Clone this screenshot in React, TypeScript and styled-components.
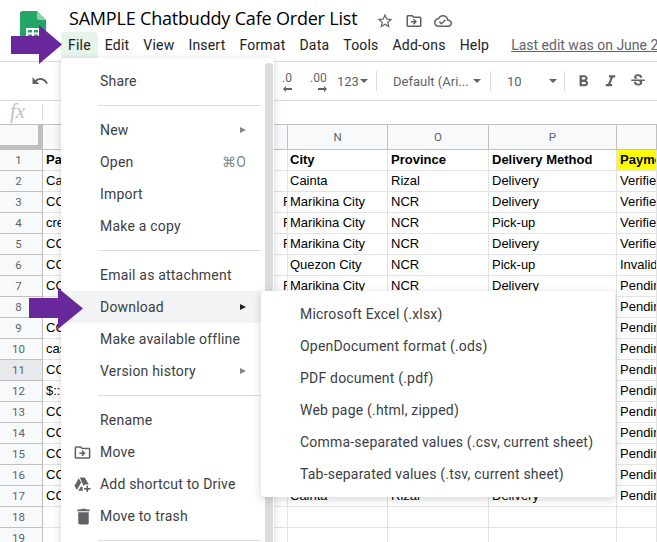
import React from "react";
import styled, { createGlobalStyle } from "styled-components";

const Global = createGlobalStyle`
  html, body { margin: 0; padding: 0; background: #fff; }
  * { box-sizing: border-box; }
`;

const P = {
  star: "M22 9.24l-7.19-.62L12 2 9.19 8.63 2 9.24l5.46 4.73L5.82 21 12 17.27 18.18 21l-1.63-7.03L22 9.24zM12 15.4l-3.76 2.27 1-4.28-3.32-2.88 4.38-.38L12 6.1l1.71 4.04 4.38.38-3.32 2.88 1 4.28L12 15.4z",
  move: "M20 6h-8l-2-2H4c-1.1 0-1.99.9-1.99 2L2 18c0 1.1.9 2 2 2h16c1.1 0 2-.9 2-2V8c0-1.1-.9-2-2-2zm0 12H4V6h5.17l2 2H20v10zm-8.01-9l-1.41 1.41L12.16 12H8v2h4.16l-1.59 1.59L11.99 17 16 13.01 11.99 9z",
  cloud: "M19.35 10.04C18.67 6.59 15.64 4 12 4 9.11 4 6.6 5.64 5.35 8.04 2.34 8.36 0 10.91 0 14c0 3.31 2.69 6 6 6h13c2.76 0 5-2.24 5-5 0-2.64-2.05-4.78-4.65-4.96zM19 18H6c-2.21 0-4-1.79-4-4 0-2.05 1.53-3.76 3.56-3.97l1.07-.11.5-.95C8.08 7.14 9.94 6 12 6c2.62 0 4.88 1.86 5.39 4.43l.3 1.5 1.53.11c1.56.1 2.78 1.41 2.78 2.96 0 1.65-1.35 3-3 3zm-9-3.82l-2.09-2.09L6.5 13.5 10 17l6.01-6.01-1.41-1.41z",
  undo: "M12.5 8c-2.65 0-5.05.99-6.9 2.6L2 7v9h9l-3.62-3.62c1.39-1.16 3.16-1.88 5.12-1.88 3.54 0 6.55 2.31 7.6 5.5l2.37-.78C21.08 11.03 17.15 8 12.5 8z",
  trash: "M6 19c0 1.1.9 2 2 2h8c1.1 0 2-.9 2-2V7H6v12zM19 4h-3.5l-1-1h-5l-1 1H5v2h14V4z",
  drive: "M8.6 3h6.2l5.2 9h-3.2c-1.5 0-2.8.5-3.6 1.5zM7.3 4.2l3.1 5.4L5 19l-3.1-5.3zM6.6 20l3.1-5.3h2.6c-.2.7-.3 1.4-.3 2 0 1.2.3 2.3.9 3.3zM17 13.5h2v3h3v2h-3v3h-2v-3h-3v-2h3z",
  bold: "M15.6 10.79c.97-.67 1.65-1.77 1.65-2.79 0-2.26-1.75-4-4-4H7v14h7.04c2.09 0 3.71-1.7 3.71-3.79 0-1.52-.86-2.82-2.15-3.42zM10 6.5h3c.83 0 1.5.67 1.5 1.5s-.67 1.5-1.5 1.5h-3v-3zm3.5 9H10v-3h3.5c.83 0 1.5.67 1.5 1.5s-.67 1.5-1.5 1.5z",
  italic: "M10 4v3h2.21l-3.42 8H6v3h8v-3h-2.21l3.42-8H18V4z",
  strike: "M7.24 8.75c-.26-.48-.39-1.03-.39-1.67 0-.61.13-1.16.4-1.67.26-.5.63-.93 1.11-1.29.48-.35 1.05-.63 1.7-.83.66-.19 1.39-.29 2.17-.29.81 0 1.54.11 2.21.34.66.22 1.23.54 1.69.94.47.4.83.88 1.08 1.43.25.55.38 1.15.38 1.81h-3.01c0-.31-.05-.59-.15-.85-.09-.27-.24-.49-.44-.68-.2-.19-.45-.33-.75-.44-.3-.1-.66-.16-1.06-.16-.39 0-.74.04-1.03.13-.29.09-.53.21-.72.36-.19.16-.34.34-.44.55-.1.21-.15.43-.15.66 0 .48.25.88.74 1.21.38.25.77.48 1.41.7H7.39c-.05-.08-.11-.17-.15-.25zM21 12v-2H3v2h9.62c.18.07.4.14.55.2.37.17.66.34.87.51.21.17.35.36.43.57.07.2.11.43.11.69 0 .23-.05.45-.14.66-.09.2-.23.38-.42.53-.19.15-.42.26-.71.35-.29.08-.63.13-1.01.13-.43 0-.83-.04-1.18-.13s-.66-.23-.91-.42c-.25-.19-.45-.44-.59-.75-.14-.31-.25-.76-.25-1.21H6.4c0 .55.08 1.13.24 1.58.16.45.37.85.65 1.21.28.35.6.66.98.92.37.26.78.48 1.22.65.44.17.9.3 1.38.39.48.08.96.13 1.44.13.8 0 1.53-.09 2.18-.28s1.21-.45 1.67-.79c.46-.34.82-.77 1.07-1.27s.38-1.07.38-1.71c0-.6-.1-1.14-.31-1.61-.05-.11-.11-.23-.17-.33H21z",
};

const Icon = ({ d, size = 20, color = "#5f6368" }: { d: string; size?: number; color?: string }) => (
  <svg width={size} height={size} viewBox="0 0 24 24" fill={color}>
    <path d={d} />
  </svg>
);

const Page = styled.div`
  position: relative;
  width: 657px;
  height: 542px;
  overflow: hidden;
  display: flex;
  flex-direction: column;
  background: #fff;
  font-family: Roboto, "Liberation Sans", sans-serif;
`;

/* header */
const Header = styled.header`
  height: 61px;
  flex: none;
  display: flex;
  background: #fff;
`;
const LogoSlot = styled.div`
  width: 61px;
  flex: none;
  padding: 11px 0 0 20px;
`;
const TitleBlock = styled.div`
  display: flex;
  flex-direction: column;
  white-space: nowrap;
`;
const TitleRow = styled.div`
  height: 32px;
  padding: 4px 0 0 8px;
  display: flex;
  align-items: center;
`;
const Title = styled.h1`
  margin: 0;
  font: 400 18px/24px "Open Sans", Roboto, sans-serif;
  color: #000;
  letter-spacing: -0.19px;
`;
const TitleIcons = styled.div`
  display: flex;
  align-items: center;
  gap: 11px;
  margin-left: 19px;
  padding-top: 5px;
`;
const MenuBar = styled.nav`
  display: flex;
  align-items: center;
  height: 26px;
`;
const MenuTab = styled.div<{ $active?: boolean }>`
  height: 26px;
  padding: 0 7px;
  display: flex;
  align-items: center;
  font-size: 14px;
  letter-spacing: 0.2px;
  color: #202124;
  background: ${(p) => (p.$active ? "#e6f4ea" : "transparent")};
  border-radius: 4px 4px 0 0;
`;
const LastEdit = styled.a`
  margin-left: 15px;
  font-size: 14px;
  color: #5f6368;
  text-decoration: underline;
`;

/* toolbar */
const Toolbar = styled.div`
  height: 40px;
  flex: none;
  display: flex;
  align-items: center;
  border-top: 1px solid #dadce0;
  border-bottom: 1px solid #dadce0;
  padding-left: 31px;
  color: #5f6368;
  font-size: 13px;
`;
const ToolSlot = styled.div<{ $w: number; $inset?: number }>`
  width: ${(p) => p.$w}px;
  flex: none;
  padding-left: ${(p) => p.$inset ?? 0}px;
  display: flex;
  align-items: center;
  white-space: nowrap;
`;
const ToolText = styled.span<{ $w: number }>`
  width: ${(p) => p.$w}px;
  flex: none;
`;
const ToolSep = styled.div`
  width: 1px;
  height: 20px;
  flex: none;
  background: #dadce0;
`;
const Caret = styled.span<{ $gap?: number }>`
  display: inline-block;
  margin-left: ${(p) => p.$gap ?? 1}px;
  border-left: 4px solid transparent;
  border-right: 4px solid transparent;
  border-top: 4px solid #5f6368;
`;
const DecimalWrap = styled.span`
  position: relative;
  display: inline-block;
  font-size: 12px;
  font-weight: 400;
  padding-bottom: 6px;
`;
const DecimalArrow = styled.svg<{ $flip?: boolean }>`
  position: absolute;
  right: 0;
  bottom: -1px;
  transform: ${(p) => (p.$flip ? "scaleX(-1)" : "none")};
`;

/* formula bar */
const FormulaBar = styled.div`
  height: 23px;
  flex: none;
  display: flex;
  align-items: center;
  padding-left: 10px;
`;
const Fx = styled.span`
  font: italic 21px "Liberation Serif", serif;
  color: #bdc1c6;
  width: 33px;
  border-right: 1px solid #dadce0;
  height: 17px;
  line-height: 15px;
`;

/* sheet */
const Sheet = styled.div`
  flex: 1;
  min-height: 0;
  overflow: hidden;
  display: grid;
  grid-template-columns: 43px 238px 7px 100px 101px 128px 40px;
  grid-template-rows: 25px;
  grid-auto-rows: 21px;
  border-top: 1px solid #c0c0c0;
  font: 13px "Liberation Sans", Arial, sans-serif;
  color: #000;
`;
const Corner = styled.div`
  background: #f8f9fa;
  border-right: 5px solid #c0c0c0;
  border-bottom: 5px solid #c0c0c0;
`;
const ColHead = styled.div<{ $open?: boolean }>`
  background: #f8f9fa;
  border-right: ${(p) => (p.$open ? "0" : "1px solid #c0c0c0")};
  border-bottom: 1px solid #c0c0c0;
  display: flex;
  align-items: center;
  justify-content: center;
  font: 11.5px Roboto, sans-serif;
  color: #5f6368;
`;
const RowHead = styled.div<{ $selected?: boolean }>`
  background: ${(p) => (p.$selected ? "#e8eaed" : "#f8f9fa")};
  border-right: 1px solid #c0c0c0;
  border-bottom: 1px solid #c0c0c0;
  padding-right: 5px;
  display: flex;
  align-items: center;
  justify-content: center;
  font: 11.5px Roboto, sans-serif;
  color: #5f6368;
`;
const Cell = styled.div<{ $bold?: boolean; $fill?: string; $open?: boolean; $pad?: number }>`
  background: ${(p) => p.$fill ?? "#fff"};
  border-right: ${(p) => (p.$open ? "0" : "1px solid #e2e3e3")};
  border-bottom: 1px solid #e2e3e3;
  padding: 0 0 0 ${(p) => p.$pad ?? 3}px;
  font-weight: ${(p) => (p.$bold ? 700 : 400)};
  line-height: 20px;
  white-space: nowrap;
  overflow: hidden;
`;

/* menus */
const FileMenu = styled.div`
  position: absolute;
  left: 61px;
  top: 58px;
  width: 213px;
  height: 500px;
  padding-top: 7px;
  background: #fff;
  border-radius: 4px;
  box-shadow: 0 2px 6px 2px rgba(60, 64, 67, 0.15);
`;
const ScrollThumb = styled.div`
  position: absolute;
  left: 204px;
  top: 5px;
  width: 8px;
  bottom: 0;
  border-radius: 4px 4px 0 0;
  background: #dadce0;
`;
const MenuList = styled.div`
  width: 200px;
`;
const Item = styled.div<{ $hover?: boolean }>`
  height: 32px;
  display: flex;
  align-items: center;
  padding: 0 15px 0 12px;
  font-size: 14px;
  letter-spacing: 0.2px;
  color: #3c4043;
  white-space: nowrap;
  background: ${(p) => (p.$hover ? "#f1f3f4" : "transparent")};
`;
const ItemIcon = styled.span`
  width: 27px;
  flex: none;
  display: flex;
  align-items: center;
`;
const ItemLabel = styled.span`
  flex: 1;
`;
const Shortcut = styled.span`
  color: #80868b;
`;
const SubArrow = styled.span<{ $dark?: boolean }>`
  width: 0;
  height: 0;
  border-top: 3.5px solid transparent;
  border-bottom: 3.5px solid transparent;
  border-left: 6px solid ${(p) => (p.$dark ? "#202124" : "#80868b")};
`;
const Sep = styled.div`
  height: 1px;
  margin: 8px 0 8px 37px;
  background: #dadce0;
`;
const SubMenu = styled.div`
  position: absolute;
  left: 261px;
  top: 291px;
  width: 354px;
  height: 206px;
  padding: 7px 0;
  background: #fff;
  border-radius: 4px;
  box-shadow: 0 2px 6px 2px rgba(60, 64, 67, 0.15);
`;
const SubItem = styled.div`
  height: 32px;
  display: flex;
  align-items: center;
  padding-left: 39px;
  font-size: 14px;
  letter-spacing: 0.2px;
  color: #3c4043;
  white-space: nowrap;
`;
const PurpleArrow = styled.svg<{ $x: number; $y: number }>`
  position: absolute;
  left: ${(p) => p.$x}px;
  top: ${(p) => p.$y}px;
`;

const Logo = () => (
  <svg width="26" height="36" viewBox="0 0 26 36">
    <path d="M2.5 0H17l9 9v24.5a2.5 2.5 0 0 1-2.5 2.5h-21A2.5 2.5 0 0 1 0 33.500v-31A2.500 2.500 0 0 1 2.500 0z" fill="#23a566" />
    <path d="M17 0l9 9h-6.500A2.500 2.500 0 0 1 17 6.500z" fill="#8ed1b1" />
    <path d="M6 17h14v11H6z" fill="#fff" />
    <path d="M8 19h4v2.500H8zM14 19h4v2.500h-4zM8 23.500h4V26H8zM14 23.500h4V26h-4z" fill="#23a566" />
  </svg>
);

const tabs = ["Edit", "View", "Insert", "Format", "Data", "Tools", "Add-ons", "Help"];

const left = ["Ca", "CC", "cre", "CC", "CC", "CC", "", "CC", "cas", "CC", "$::", "CC", "CC", "CC", "CC", "CC"];
const stub = [3, 4, 5, 7, 8];
const body: [string, string, string][] = [
  ["Cainta", "Rizal", "Delivery"],
  ["Marikina City", "NCR", "Delivery"],
  ["Marikina City", "NCR", "Pick-up"],
  ["Marikina City", "NCR", "Delivery"],
  ["Quezon City", "NCR", "Pick-up"],
  ["Marikina City", "NCR", "Delivery"],
];
const status = (row: number) => (row <= 5 ? "Verified" : row === 6 ? "Invalid" : row <= 17 ? "Pending" : "");

const rowCells = (row: number) => {
  const data = row === 17 ? body[0] : body[row - 2] ?? ["", "", ""];
  return (
    <React.Fragment key={row}>
      <RowHead $selected={row === 11}>{row}</RowHead>
      <Cell $open>{row <= 17 ? left[row - 2] : ""}</Cell>
      <Cell $pad={2}>{stub.includes(row) ? "F" : ""}</Cell>
      <Cell $pad={2}>{data[0]}</Cell>
      <Cell>{data[1]}</Cell>
      <Cell>{data[2]}</Cell>
      <Cell>{status(row)}</Cell>
    </React.Fragment>
  );
};

const DecimalMark = ({ flip }: { flip?: boolean }) => (
  <DecimalArrow $flip={flip} width="9" height="6" viewBox="0 0 9 6">
    <path d="M0 3l3-3v2h6v2H3v2z" fill="#5f6368" />
  </DecimalArrow>
);

export default function App() {
  return (
    <Page>
      <Global />
      <Header>
        <LogoSlot>
          <Logo />
        </LogoSlot>
        <TitleBlock>
          <TitleRow>
            <Title>SAMPLE Chatbuddy Cafe Order List</Title>
            <TitleIcons>
              <Icon d={P.star} size={18} />
              <Icon d={P.move} size={18} />
              <Icon d={P.cloud} size={18} />
            </TitleIcons>
          </TitleRow>
          <MenuBar>
            <MenuTab $active>File</MenuTab>
            {tabs.map((t) => (
              <MenuTab key={t}>{t}</MenuTab>
            ))}
            <LastEdit>Last edit was on June 2</LastEdit>
          </MenuBar>
        </TitleBlock>
      </Header>

      <Toolbar>
        <ToolSlot $w={251}>
          <Icon d={P.undo} size={18} />
        </ToolSlot>
        <ToolSlot $w={28}>
          <DecimalWrap>
            .0
            <DecimalMark />
          </DecimalWrap>
        </ToolSlot>
        <ToolSlot $w={27}>
          <DecimalWrap>
            .00
            <DecimalMark flip />
          </DecimalWrap>
        </ToolSlot>
        <ToolSlot $w={39}>
          123
          <Caret />
        </ToolSlot>
        <ToolSep />
        <ToolSlot $w={113} $inset={16}>
          <ToolText $w={79}>Default (Ari...</ToolText>
          <Caret />
        </ToolSlot>
        <ToolSep />
        <ToolSlot $w={73} $inset={16}>
          <ToolText $w={41}>10</ToolText>
          <Caret />
        </ToolSlot>
        <ToolSep />
        <ToolSlot $w={28} $inset={9}>
          <Icon d={P.bold} size={21} />
        </ToolSlot>
        <ToolSlot $w={28} $inset={8}>
          <Icon d={P.italic} size={19} />
        </ToolSlot>
        <ToolSlot $w={28} $inset={8}>
          <Icon d={P.strike} size={18} />
        </ToolSlot>
      </Toolbar>

      <FormulaBar>
        <Fx>fx</Fx>
      </FormulaBar>

      <Sheet>
        <Corner />
        <ColHead $open />
        <ColHead />
        <ColHead>N</ColHead>
        <ColHead>O</ColHead>
        <ColHead>P</ColHead>
        <ColHead />

        <RowHead>1</RowHead>
        <Cell $bold $open>Pa</Cell>
        <Cell />
        <Cell $bold $pad={2}>City</Cell>
        <Cell $bold>Province</Cell>
        <Cell $bold>Delivery Method</Cell>
        <Cell $bold $fill="#ffff00">Payment</Cell>
        {Array.from({ length: 18 }, (_, i) => rowCells(i + 2))}
      </Sheet>

      <FileMenu>
        <MenuList>
          <Item><ItemIcon /><ItemLabel>Share</ItemLabel></Item>
          <Sep />
          <Item><ItemIcon /><ItemLabel>New</ItemLabel><SubArrow /></Item>
          <Item><ItemIcon /><ItemLabel>Open</ItemLabel><Shortcut>⌘O</Shortcut></Item>
          <Item><ItemIcon /><ItemLabel>Import</ItemLabel></Item>
          <Item><ItemIcon /><ItemLabel>Make a copy</ItemLabel></Item>
          <Sep />
          <Item><ItemIcon /><ItemLabel>Email as attachment</ItemLabel></Item>
          <Item $hover><ItemIcon /><ItemLabel>Download</ItemLabel><SubArrow $dark /></Item>
          <Item><ItemIcon /><ItemLabel>Make available offline</ItemLabel></Item>
          <Item><ItemIcon /><ItemLabel>Version history</ItemLabel><SubArrow /></Item>
          <Sep />
          <Item><ItemIcon /><ItemLabel>Rename</ItemLabel></Item>
          <Item><ItemIcon><Icon d={P.move} size={19} /></ItemIcon><ItemLabel>Move</ItemLabel></Item>
          <Item><ItemIcon><Icon d={P.drive} size={19} /></ItemIcon><ItemLabel>Add shortcut to Drive</ItemLabel></Item>
          <Item><ItemIcon><Icon d={P.trash} size={21} /></ItemIcon><ItemLabel>Move to trash</ItemLabel></Item>
          <Sep />
        </MenuList>
        <ScrollThumb />
      </FileMenu>

      <SubMenu>
        <SubItem>Microsoft Excel (.xlsx)</SubItem>
        <SubItem>OpenDocument format (.ods)</SubItem>
        <SubItem>PDF document (.pdf)</SubItem>
        <SubItem>Web page (.html, zipped)</SubItem>
        <SubItem>Comma-separated values (.csv, current sheet)</SubItem>
        <SubItem>Tab-separated values (.tsv, current sheet)</SubItem>
      </SubMenu>

      <PurpleArrow $x={11} $y={25} width="52" height="39" viewBox="0 0 52 39">
        <path d="M0 11h28V0l23 19.500L28 39V29H0z" fill="#68279a" />
      </PurpleArrow>
      <PurpleArrow $x={29} $y={288} width="55" height="41" viewBox="0 0 55 41">
        <path d="M0 10h29V0l25 20.500L29 41V30H0z" fill="#68279a" />
      </PurpleArrow>
    </Page>
  );
}
